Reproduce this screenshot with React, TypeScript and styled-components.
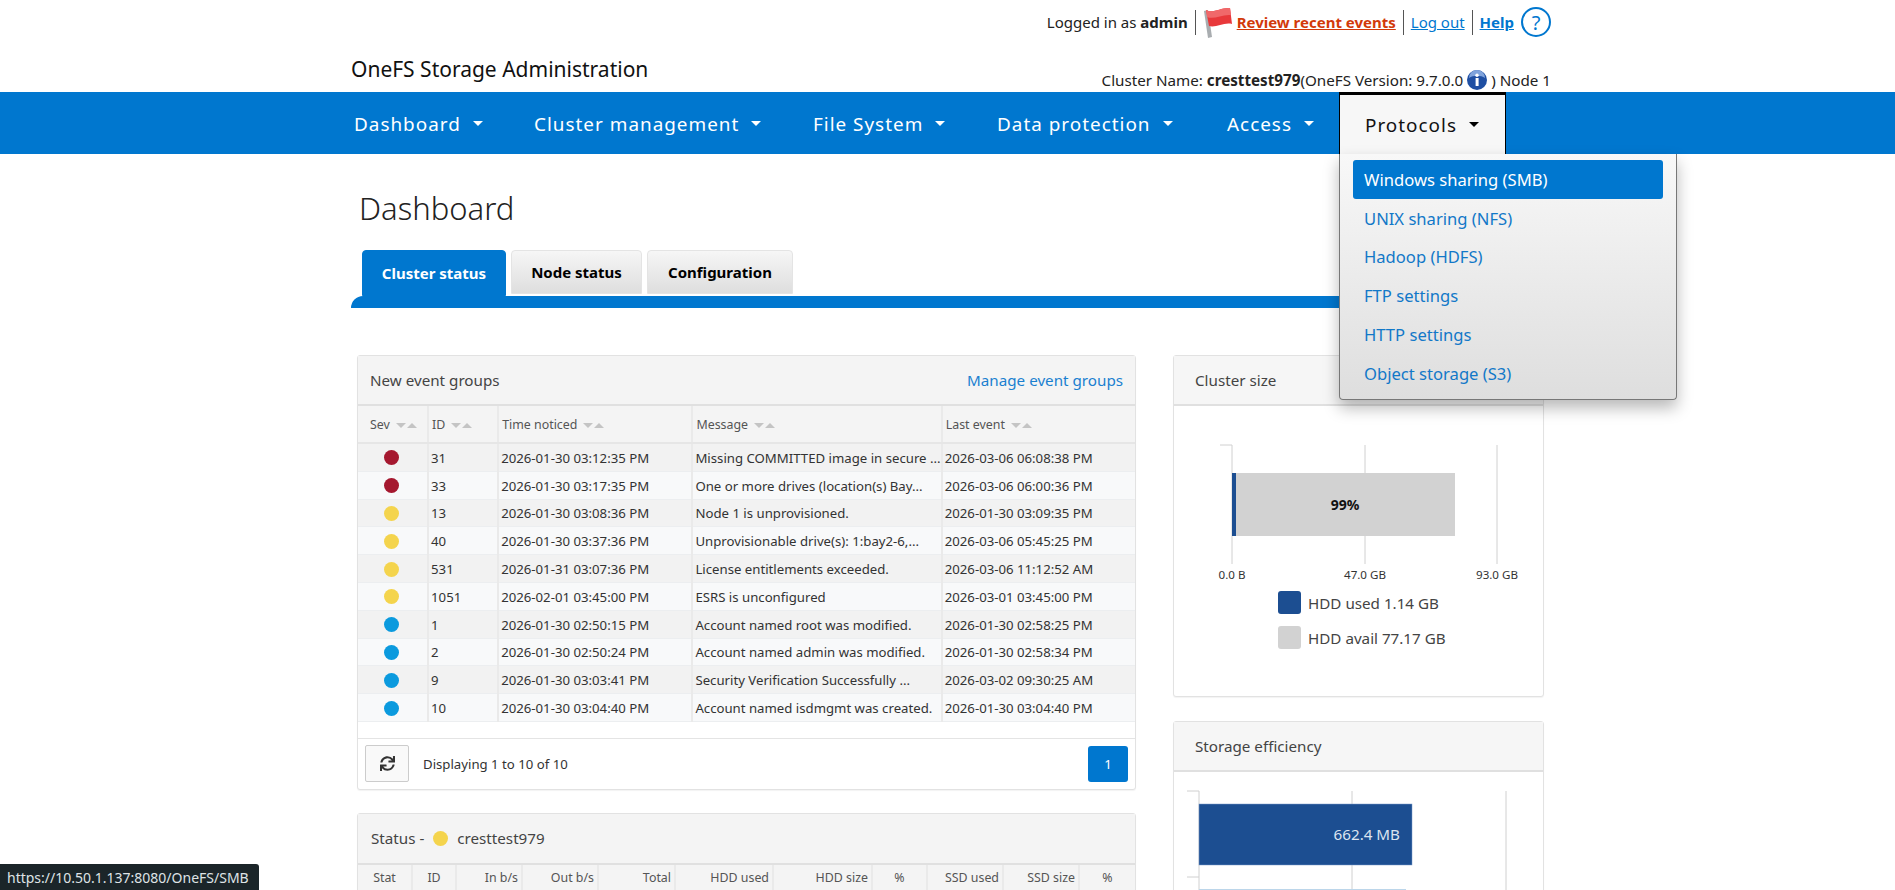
import React from 'react';
import styled, { createGlobalStyle } from 'styled-components';
import { FaSync } from 'react-icons/fa';

const BLUE = '#0077cf';

const GlobalStyle = createGlobalStyle`
    html, body {
        margin: 0;
        height: 890px;
        overflow: hidden;
        background: #fff;
    }
    body {
        font-family: "Noto Sans", "Open Sans", sans-serif;
        font-size: 13.2px;
        color: #333;
    }
`;

const Wrap = styled.div`
    width: 1200px;
    margin-left: 351px;
`;

const TopBar = styled.div`
    display: flex;
    justify-content: flex-end;
    align-items: center;
    height: 44px;
    font-size: 15px;
    color: #222;
`;

const TopItem = styled.div<{ $sep?: boolean }>`
    display: flex;
    align-items: center;
    height: 25px;
    padding: 0 7px;
    border-left: ${(p) => (p.$sep ? '1px solid #555' : 'none')};
    &:last-child { padding-right: 0; }
`;

const TopLink = styled.a<{ $color: string; $bold?: boolean }>`
    color: ${(p) => p.$color};
    font-weight: ${(p) => (p.$bold ? 700 : 400)};
    text-decoration: underline;
`;

const FlagBox = styled.span`
    display: flex;
    flex-shrink: 0;
    margin: 0 4px 0 0;
`;

const HelpCircle = styled.span`
    display: inline-flex;
    align-items: center;
    justify-content: center;
    box-sizing: border-box;
    width: 30px;
    height: 30px;
    margin-left: 7px;
    border: 2px solid ${BLUE};
    border-radius: 50%;
    color: ${BLUE};
    font-size: 20px;
`;

const BrandRow = styled.div`
    display: flex;
    justify-content: space-between;
    align-items: flex-end;
    height: 48px;
`;

const Brand = styled.div`
    font-size: 21px;
    color: #111;
    line-height: 26px;
    padding-bottom: 10px;
`;

const ClusterName = styled.div`
    display: flex;
    align-items: center;
    font-size: 15.2px;
    color: #222;
    height: 24px;
    white-space: pre;
`;

const NavBar = styled.nav`
    height: 62px;
    background: ${BLUE};
`;

const NavInner = styled.ul`
    display: flex;
    list-style: none;
    margin: 0;
    padding: 0;
    width: 1200px;
    margin-left: 351px;
    height: 100%;
`;

const NavItem = styled.li<{ $width: number }>`
    display: flex;
    align-items: center;
    width: ${(p) => p.$width}px;
    padding: 1px 0 0 3px;
    box-sizing: border-box;
    color: #fff;
    font-size: 18.9px;
    letter-spacing: 1px;
`;

const Caret = styled.span<{ $dark?: boolean }>`
    width: 0;
    height: 0;
    margin-left: 12px;
    border-left: 5px solid transparent;
    border-right: 5px solid transparent;
    border-top: 5px solid ${(p) => (p.$dark ? '#000' : '#fff')};
`;

const ActiveNav = styled.li`
    position: relative;
    display: flex;
    align-items: center;
    box-sizing: border-box;
    width: 167px;
    margin-left: -1px;
    padding-left: 25px;
    background: #f7f7f7;
    border: 1px solid #000;
    border-top: 3px solid #000;
    border-bottom: none;
    color: #111;
    font-size: 18.9px;
    letter-spacing: 1px;
`;

const Dropdown = styled.div`
    position: absolute;
    top: 59px;
    left: -1px;
    z-index: 10;
    box-sizing: border-box;
    width: 338px;
    height: 246px;
    padding: 6px 13px;
    background: linear-gradient(#f8f8f8, #dedede);
    border: 1px solid #777;
    border-top: none;
    border-radius: 0 0 4px 4px;
    box-shadow: 0 8px 16px rgba(0, 0, 0, 0.28);
    letter-spacing: 0;
`;

const DropItem = styled.div<{ $active?: boolean }>`
    display: flex;
    align-items: center;
    height: 38.8px;
    padding-left: 11px;
    border-radius: 3px;
    font-size: 16.6px;
    color: ${(p) => (p.$active ? '#fff' : '#1278c8')};
    background: ${(p) => (p.$active ? BLUE : 'transparent')};
`;

const Title = styled.h1`
    margin: 0;
    padding: 32px 0 0 8px;
    height: 64px;
    font-size: 31px;
    line-height: 44px;
    font-weight: 300;
    color: #222;
`;

const TabRow = styled.div`
    display: flex;
    align-items: flex-start;
    gap: 5px;
    height: 46px;
    padding-left: 11px;
`;

const Tab = styled.div<{ $active?: boolean; $width: number }>`
    display: flex;
    align-items: center;
    justify-content: center;
    box-sizing: border-box;
    width: ${(p) => p.$width}px;
    height: ${(p) => (p.$active ? 46 : 44)}px;
    font-size: 15px;
    font-weight: 700;
    border-radius: 4px 4px 0 0;
    color: ${(p) => (p.$active ? '#fff' : '#000')};
    background: ${(p) => (p.$active ? BLUE : 'linear-gradient(#f6f6f6, #dedede)')};
    border: 1px solid ${(p) => (p.$active ? BLUE : '#e4e4e4')};
`;

const TabLine = styled.div`
    height: 12px;
    width: 1195px;
    background: ${BLUE};
    border-radius: 12px 0 0 0;
`;

const Columns = styled.div`
    display: grid;
    grid-template-columns: 779px 371px;
    column-gap: 37px;
    margin: 47px 0 0 6px;
`;

const Stack = styled.div<{ $gap: number }>`
    display: flex;
    flex-direction: column;
    gap: ${(p) => p.$gap}px;
`;

const Panel = styled.section`
    box-sizing: border-box;
    border: 1px solid #e2e2e2;
    border-radius: 3px;
    background: #fff;
    box-shadow: 0 1px 1px rgba(0, 0, 0, 0.05);
`;

const PanelHead = styled.div<{ $height?: number }>`
    display: flex;
    justify-content: space-between;
    align-items: center;
    box-sizing: border-box;
    height: ${(p) => p.$height ?? 50}px;
    padding: 0 12px;
    font-size: 15.2px;
    color: #444;
    background: #f4f4f4;
    border-bottom: 2px solid #e0e0e0;
`;

const HeadLink = styled.a`
    color: #1a80d0;
`;

const Dot = styled.span<{ $color: string }>`
    display: inline-block;
    width: 15px;
    height: 15px;
    border-radius: 50%;
    background: ${(p) => p.$color};
`;

const StatusLabel = styled.span`
    display: flex;
    align-items: center;
    gap: 5px;
    white-space: pre;
    padding-left: 1px;
`;

const Table = styled.table`
    width: 100%;
    table-layout: fixed;
    border-collapse: collapse;
    font-size: 13.2px;
`;

const Th = styled.th<{ $right?: boolean; $center?: boolean }>`
    height: 36px;
    padding: 0 3px;
    font-size: 12.4px;
    font-weight: 400;
    color: #555;
    text-align: ${(p) => (p.$right ? 'right' : p.$center ? 'center' : 'left')};
    background: #f4f4f4;
    border-left: 2px solid #eaeaea;
    border-bottom: 2px solid #e6e6e6;
    white-space: nowrap;
    &:first-child { border-left: none; }
`;

const SevTh = styled(Th)`
    &:first-child { padding-left: 12px; }
`;

const StatusTh = styled(Th)`
    height: 26px;
`;

const Tr = styled.tr<{ $odd: boolean }>`
    background: ${(p) => (p.$odd ? '#f2f2f2' : '#f8f9fa')};
`;

const Td = styled.td<{ $center?: boolean }>`
    height: 25.8px;
    padding: 1px 2px 0;
    color: #333;
    text-align: ${(p) => (p.$center ? 'center' : 'left')};
    border-left: 2px solid #eaeaea;
    border-bottom: 1px solid #eceef0;
    white-space: nowrap;
    overflow: hidden;
    &:first-child { border-left: none; line-height: 0; padding-right: 5px; }
`;

const SortBox = styled.span`
    display: inline-flex;
    gap: 1px;
    margin-left: 6px;
    vertical-align: 1px;
`;

const SortTri = styled.i<{ $up?: boolean }>`
    width: 0;
    height: 0;
    border-left: 5px solid transparent;
    border-right: 5px solid transparent;
    ${(p) => (p.$up ? 'border-bottom: 5px solid #c4c4c4;' : 'border-top: 5px solid #c4c4c4;')}
`;

const TableGap = styled.div`
    height: 16px;
    border-bottom: 1px solid #e4e4e4;
`;

const Footer = styled.div`
    display: flex;
    align-items: center;
    height: 50px;
    padding: 0 7px;
    box-sizing: border-box;
`;

const RefreshBtn = styled.button`
    display: flex;
    align-items: center;
    justify-content: center;
    width: 44px;
    height: 37px;
    padding: 0;
    margin-right: 14px;
    color: #333;
    font-size: 15px;
    background: #f9f9f9;
    border: 1px solid #ccc;
    border-radius: 2px;
`;

const PageBtn = styled.span`
    display: flex;
    align-items: center;
    justify-content: center;
    width: 40px;
    height: 36px;
    margin-left: auto;
    color: #fff;
    background: ${BLUE};
    border-radius: 3px;
`;

const ChartPanelHead = styled(PanelHead)`
    background: #f6f6f6;
    padding-left: 21px;
`;

const ChartSvg = styled.svg`
    display: block;
    font-family: "Noto Sans", sans-serif;
`;

const Legend = styled.div`
    display: flex;
    flex-direction: column;
    gap: 12px;
    padding: 7px 0 0 104px;
    height: 112px;
    box-sizing: border-box;
`;

const LegendRow = styled.div`
    display: flex;
    align-items: center;
    gap: 7px;
    font-size: 15.2px;
    color: #444;
`;

const Swatch = styled.span<{ $color: string }>`
    width: 23px;
    height: 23px;
    border-radius: 3px;
    background: ${(p) => p.$color};
`;

const StatusTip = styled.div`
    position: fixed;
    left: 0;
    bottom: 0;
    display: flex;
    align-items: center;
    box-sizing: border-box;
    width: 259px;
    height: 26px;
    padding-left: 7px;
    font-size: 14px;
    color: #dfe3e6;
    background: #1b2529;
    border-radius: 0 3px 0 0;
    z-index: 20;
`;

const SEV = { crit: '#a5182f', warn: '#f4d44d', info: '#0b9ade' };

const events = [
    [SEV.crit, '31', '2026-01-30 03:12:35 PM', 'Missing COMMITTED image in secure ...', '2026-03-06 06:08:38 PM'],
    [SEV.crit, '33', '2026-01-30 03:17:35 PM', 'One or more drives (location(s) Bay...', '2026-03-06 06:00:36 PM'],
    [SEV.warn, '13', '2026-01-30 03:08:36 PM', 'Node 1 is unprovisioned.', '2026-01-30 03:09:35 PM'],
    [SEV.warn, '40', '2026-01-30 03:37:36 PM', 'Unprovisionable drive(s): 1:bay2-6,...', '2026-03-06 05:45:25 PM'],
    [SEV.warn, '531', '2026-01-31 03:07:36 PM', 'License entitlements exceeded.', '2026-03-06 11:12:52 AM'],
    [SEV.warn, '1051', '2026-02-01 03:45:00 PM', 'ESRS is unconfigured', '2026-03-01 03:45:00 PM'],
    [SEV.info, '1', '2026-01-30 02:50:15 PM', 'Account named root was modified.', '2026-01-30 02:58:25 PM'],
    [SEV.info, '2', '2026-01-30 02:50:24 PM', 'Account named admin was modified.', '2026-01-30 02:58:34 PM'],
    [SEV.info, '9', '2026-01-30 03:03:41 PM', 'Security Verification Successfully ...', '2026-03-02 09:30:25 AM'],
    [SEV.info, '10', '2026-01-30 03:04:40 PM', 'Account named isdmgmt was created.', '2026-01-30 03:04:40 PM'],
];

const eventCols = [
    { label: 'Sev', w: 70 },
    { label: 'ID', w: 70 },
    { label: 'Time noticed', w: 194 },
    { label: 'Message', w: 249 },
    { label: 'Last event', w: 193 },
];

const statusCols = [
    { label: 'Stat', w: 54, align: 'center' },
    { label: 'ID', w: 44, align: 'center' },
    { label: 'In b/s', w: 66, align: 'right' },
    { label: 'Out b/s', w: 76, align: 'right' },
    { label: 'Total', w: 77, align: 'right' },
    { label: 'HDD used', w: 98, align: 'right' },
    { label: 'HDD size', w: 99, align: 'right' },
    { label: '%', w: 55, align: 'center' },
    { label: 'SSD used', w: 76, align: 'right' },
    { label: 'SSD size', w: 76, align: 'right' },
    { label: '%', w: 56, align: 'center' },
];

const navItems = [
    { label: 'Dashboard', w: 180 },
    { label: 'Cluster management', w: 279 },
    { label: 'File System', w: 184 },
    { label: 'Data protection', w: 230 },
    { label: 'Access', w: 116 },
];

const protocolItems = ['Windows sharing (SMB)', 'UNIX sharing (NFS)', 'Hadoop (HDFS)', 'FTP settings', 'HTTP settings', 'Object storage (S3)'];

const FlagIcon = () => (
    <svg width="30" height="31" viewBox="0 0 30 31">
        <path d="M1 4 L5 31 L9 30 L5 3 Z" fill="#a9adb0" />
        <path d="M3 3 C10 7 18 0 27 1 L29 17 C21 15 13 21 6 19 Z" fill="#e8383b" />
        <path d="M3 3 C10 7 18 0 27 1 L28 8 C19 7 11 13 4 10 Z" fill="#f0686a" />
    </svg>
);

const InfoIcon = () => (
    <svg width="20" height="20" viewBox="0 0 20 20">
        <circle cx="10" cy="10" r="10" fill="#1f4fa3" />
        <path d="M2 8 A8 8 0 0 1 18 8 C14 5 6 5 2 8 Z" fill="#7fa3dc" />
        <rect x="8.6" y="8" width="3" height="8" fill="#fff" />
        <circle cx="10" cy="5.3" r="1.7" fill="#fff" />
    </svg>
);

const ClusterChart = () => (
    <ChartSvg width="369" height="178" viewBox="0 0 369 178">
        <path d="M46 39 H58 V158 M191 39 V158 M323 39 V158" fill="none" stroke="#d0d0d0" />
        <rect x="58" y="67" width="223" height="63" fill="#d2d2d2" />
        <rect x="58" y="67" width="4" height="63" fill="#1c4e91" />
        <text x="171" y="104" textAnchor="middle" fontSize="14" fontWeight="700" fill="#111">99%</text>
        <g fontSize="11.6" fill="#333" textAnchor="middle">
            <text x="58" y="173">0.0 B</text>
            <text x="191" y="173">47.0 GB</text>
            <text x="323" y="173">93.0 GB</text>
        </g>
    </ChartSvg>
);

const EfficiencyChart = () => (
    <ChartSvg width="369" height="120" viewBox="0 0 369 120">
        <path d="M13 19 H25 V120 M178 19 V120 M332 19 V120 M13 105 H25" fill="none" stroke="#d0d0d0" />
        <rect x="25" y="32" width="213" height="61" fill="#1c4e91" stroke="#7b9ccb" strokeWidth="0.5" />
        <text x="226" y="68" textAnchor="end" fontSize="15.2" fill="#dbe4f0">662.4 MB</text>
        <rect x="25" y="117" width="207" height="3" fill="#bcd6ea" />
    </ChartSvg>
);

const App = () => {
    return (
        <>
            <GlobalStyle />
            <Wrap>
                <TopBar>
                    <TopItem>Logged in as&nbsp;<b>admin</b></TopItem>
                    <TopItem $sep>
                        <FlagBox><FlagIcon /></FlagBox>
                        <TopLink $color="#d23a0a" $bold>Review recent events</TopLink>
                    </TopItem>
                    <TopItem $sep><TopLink $color={BLUE}>Log out</TopLink></TopItem>
                    <TopItem $sep>
                        <TopLink $color={BLUE} $bold>Help</TopLink>
                        <HelpCircle>?</HelpCircle>
                    </TopItem>
                </TopBar>
                <BrandRow>
                    <Brand>OneFS Storage Administration</Brand>
                    <ClusterName>
                        Cluster Name: <b>cresttest979</b>(OneFS Version: 9.7.0.0 <InfoIcon /> ) Node 1
                    </ClusterName>
                </BrandRow>
            </Wrap>
            <NavBar>
                <NavInner>
                    {navItems.map((item) => (
                        <NavItem key={item.label} $width={item.w}>
                            {item.label}
                            <Caret />
                        </NavItem>
                    ))}
                    <ActiveNav>
                        Protocols
                        <Caret $dark />
                        <Dropdown>
                            {protocolItems.map((label, i) => (
                                <DropItem key={label} $active={i === 0}>{label}</DropItem>
                            ))}
                        </Dropdown>
                    </ActiveNav>
                </NavInner>
            </NavBar>
            <Wrap>
                <Title>Dashboard</Title>
                <TabRow>
                    <Tab $active $width={144}>Cluster status</Tab>
                    <Tab $width={131}>Node status</Tab>
                    <Tab $width={146}>Configuration</Tab>
                </TabRow>
                <TabLine />
                <Columns>
                    <Stack $gap={23}>
                        <Panel>
                            <PanelHead>
                                New event groups
                                <HeadLink>Manage event groups</HeadLink>
                            </PanelHead>
                            <Table>
                                <colgroup>
                                    {eventCols.map((c) => <col key={c.label} width={c.w} />)}
                                </colgroup>
                                <thead>
                                    <tr>
                                        {eventCols.map((c) => (
                                            <SevTh key={c.label}>
                                                {c.label}
                                                <SortBox><SortTri /><SortTri $up /></SortBox>
                                            </SevTh>
                                        ))}
                                    </tr>
                                </thead>
                                <tbody>
                                    {events.map((row, i) => (
                                        <Tr key={row[1]} $odd={i % 2 === 0}>
                                            <Td $center><Dot $color={row[0]} /></Td>
                                            <Td>{row[1]}</Td>
                                            <Td>{row[2]}</Td>
                                            <Td>{row[3]}</Td>
                                            <Td>{row[4]}</Td>
                                        </Tr>
                                    ))}
                                </tbody>
                            </Table>
                            <TableGap />
                            <Footer>
                                <RefreshBtn><FaSync /></RefreshBtn>
                                Displaying 1 to 10 of 10
                                <PageBtn>1</PageBtn>
                            </Footer>
                        </Panel>
                        <Panel>
                            <PanelHead $height={51}>
                                <StatusLabel>Status - <Dot $color={SEV.warn} /> cresttest979</StatusLabel>
                            </PanelHead>
                            <Table>
                                <colgroup>
                                    {statusCols.map((c, i) => <col key={i} width={c.w} />)}
                                </colgroup>
                                <thead>
                                    <tr>
                                        {statusCols.map((c, i) => (
                                            <StatusTh key={i} $right={c.align === 'right'} $center={c.align === 'center'}>{c.label}</StatusTh>
                                        ))}
                                    </tr>
                                </thead>
                            </Table>
                        </Panel>
                    </Stack>
                    <Stack $gap={24}>
                        <Panel>
                            <ChartPanelHead>Cluster size</ChartPanelHead>
                            <ClusterChart />
                            <Legend>
                                <LegendRow><Swatch $color="#1c4e91" />HDD used 1.14 GB</LegendRow>
                                <LegendRow><Swatch $color="#d2d2d2" />HDD avail 77.17 GB</LegendRow>
                            </Legend>
                        </Panel>
                        <Panel>
                            <ChartPanelHead>Storage efficiency</ChartPanelHead>
                            <EfficiencyChart />
                        </Panel>
                    </Stack>
                </Columns>
            </Wrap>
            <StatusTip>https://10.50.1.137:8080/OneFS/SMB</StatusTip>
        </>
    );
};

export default App;
